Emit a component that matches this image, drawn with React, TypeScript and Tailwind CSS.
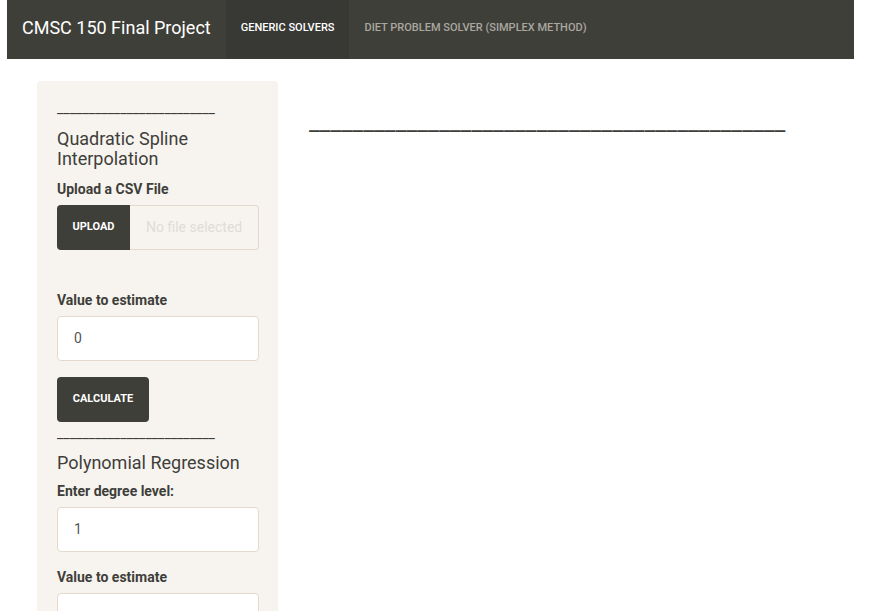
import { useState } from 'react';

const font = { fontFamily: 'Roboto, "Noto Sans", sans-serif' };

function Rule({ className = '' }: { className?: string }) {
  return <div className={`text-[14px] leading-[14px] text-[#3e3e3a] select-none ${className}`}>_________________________</div>;
}

function Label({ children }: { children: React.ReactNode }) {
  return <label className="block text-[14px] font-bold text-[#3e3e3a] leading-[20px] mb-[6px]">{children}</label>;
}

function NumberBox({ value }: { value: string }) {
  return (
    <div className="h-[45px] w-[202px] rounded-[4px] border border-[#e3d9cc] bg-white pl-[16px] flex items-center text-[14px] text-[#555]">
      {value}
    </div>
  );
}

export default function App() {
  const [tab, setTab] = useState('generic');
  return (
    <div style={font} className="min-h-[611px] bg-white overflow-hidden">
      <nav className="ml-[7px] w-[847px] h-[59px] bg-[#3f3f3a] flex items-stretch">
        <div className="pl-[15px] pr-[15px] pb-[4px] flex items-center text-[18px] text-white">CMSC 150 Final Project</div>
        <button
          onClick={() => setTab('generic')}
          className={`px-[15px] pb-[2px] text-[11px] font-medium uppercase ${tab === 'generic' ? 'bg-[#383834] text-white' : 'text-[#a9a79f]'}`}
        >
          Generic Solvers
        </button>
        <button
          onClick={() => setTab('diet')}
          className={`px-[15px] pb-[2px] text-[11px] font-medium uppercase ${tab === 'diet' ? 'bg-[#383834] text-white' : 'text-[#a9a79f]'}`}
        >
          Diet Problem Solver (Simplex Method)
        </button>
      </nav>

      <div className="flex gap-[31px] pl-[37px] pt-[22px]">
        <aside className="w-[241px] h-[560px] shrink-0 rounded-t-[4px] bg-[#f7f4ef] px-[20px] pt-[20px]">
          <Rule />
          <h3 className="mt-[14px] text-[18px] leading-[20px] text-[#3e3e3a]">Quadratic Spline Interpolation</h3>
          <div className="mt-[10px]">
            <Label>Upload a CSV File</Label>
            <div className="flex h-[45px] w-[202px]">
              <button className="w-[73px] rounded-l-[4px] bg-[#3f3f3a] text-white text-[11px] font-bold uppercase">Upload</button>
              <div className="flex-1 rounded-r-[4px] border border-l-0 border-[#e3d9cc] flex items-center pl-[16px] text-[14px] text-[#e0dcd5]">
                No file selected
              </div>
            </div>
          </div>
          <div className="mt-[40px]">
            <Label>Value to estimate</Label>
            <NumberBox value="0" />
          </div>
          <button className="mt-[16px] h-[45px] w-[92px] rounded-[4px] bg-[#3f3f3a] text-white text-[11px] font-bold uppercase">
            Calculate
          </button>
          <Rule className="mt-[4px]" />
          <h3 className="mt-[13px] text-[18px] leading-[20px] text-[#3e3e3a]">Polynomial Regression</h3>
          <div className="mt-[8px]">
            <Label>Enter degree level:</Label>
            <NumberBox value="1" />
          </div>
          <div className="mt-[15px]">
            <Label>Value to estimate</Label>
            <NumberBox value="" />
          </div>
        </aside>
        <main className="pt-[26px]">
          <h2 className="text-[24px] leading-[30px] text-[#3e3e3a] select-none">____________________________________________</h2>
        </main>
      </div>
    </div>
  );
}
